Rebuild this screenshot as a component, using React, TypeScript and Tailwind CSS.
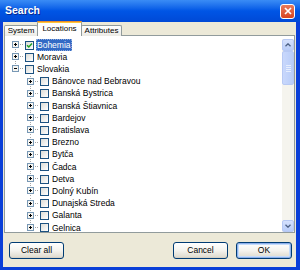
import React from 'react';

type Row = {
  label: string;
  level: number;
  open?: boolean;
  checked?: boolean;
  selected?: boolean;
  line: 'first' | 'mid' | 'last';
};

const districts = [
  'Bánovce nad Bebravou',
  'Banská Bystrica',
  'Banská Štiavnica',
  'Bardejov',
  'Bratislava',
  'Brezno',
  'Bytča',
  'Čadca',
  'Detva',
  'Dolný Kubín',
  'Dunajská Streda',
  'Galanta',
  'Gelnica',
];

const rows: Row[] = [
  { label: 'Bohemia', level: 0, checked: true, selected: true, line: 'first' },
  { label: 'Moravia', level: 0, line: 'mid' },
  { label: 'Slovakia', level: 0, open: true, line: 'last' },
  ...districts.map((d) => ({ label: d, level: 1, line: 'mid' as const })),
];

function Expander({ open, line }: { open?: boolean; line: Row['line'] }) {
  return (
    <svg width="15" height="12" viewBox="0 0 15 12" className="shrink-0">
      <line
        x1="7.5"
        x2="7.5"
        y1={line === 'first' ? 6 : 0}
        y2={line === 'last' ? 6 : 12}
        stroke="#A5A5A5"
        strokeDasharray="1 1"
      />
      <line x1="8" x2="15" y1="5.5" y2="5.5" stroke="#A5A5A5" strokeDasharray="1 1" />
      <rect x="4.5" y="2.5" width="6" height="6" fill="#F6F5F1" stroke="#7898B5" />
      <rect x="6" y="5" width="3" height="1" fill="#000" />
      {!open && <rect x="7" y="4" width="1" height="3" fill="#000" />}
    </svg>
  );
}

function Checkbox({ checked }: { checked?: boolean }) {
  return (
    <div className="w-[9px] h-[9px] shrink-0 border border-[#1C5180] bg-linear-to-br from-[#DCDCD7] to-white flex items-center justify-center">
      {checked && (
        <svg width="7" height="7" viewBox="0 0 7 7">
          <path d="M1 3.2 L2.8 5 L6 1.6" fill="none" stroke="#21A121" strokeWidth="1.5" />
        </svg>
      )}
    </div>
  );
}

function ScrollButton({ down }: { down?: boolean }) {
  return (
    <div className="h-[12px] w-[12px] shrink-0 rounded-[2px] border border-[#B7C9F4] bg-linear-to-b from-[#D5E1FD] to-[#B8CCF8] flex items-center justify-center">
      <svg width="6" height="4" viewBox="0 0 6 4">
        <path d={down ? 'M0.5 0.8 L3 3.2 L5.5 0.8' : 'M0.5 3.2 L3 0.8 L5.5 3.2'} fill="none" stroke="#4D6185" strokeWidth="1.3" />
      </svg>
    </div>
  );
}

function Button({ children, primary, w }: { children: React.ReactNode; primary?: boolean; w: string }) {
  return (
    <div
      className={`${w} h-[17px] rounded-[3px] border border-[#003C74] bg-linear-to-b from-white via-[#F4F3EE] to-[#DCD8CC] flex items-center justify-center text-[8.5px] text-black ${
        primary ? 'shadow-[inset_0_0_0_1px_#8CB0EC,inset_0_0_0_2px_#C4DCFB]' : 'shadow-[inset_0_-1px_0_#D6D0C5]'
      }`}
    >
      {children}
    </div>
  );
}

export default function App() {
  return (
    <div className="w-[300px] h-[270px] flex flex-col font-['Liberation_Sans',Arial,sans-serif] bg-white select-none">
      <div className="h-[22px] shrink-0 flex items-center pl-[5px] pr-[5px] bg-linear-to-b from-[#3A8CF5] via-[#0055E5] to-[#0049D6]">
        <span className="text-white font-bold text-[10.5px] [text-shadow:1px_1px_#0A2A90]">Search</span>
        <div className="ml-auto w-[15px] h-[15px] rounded-[3px] border border-white bg-linear-to-b from-[#E8795A] to-[#D8431D] flex items-center justify-center">
          <svg width="8" height="8" viewBox="0 0 8 8">
            <path d="M1 1 L7 7 M7 1 L1 7" stroke="white" strokeWidth="1.7" />
          </svg>
        </div>
      </div>

      <div className="flex-1 flex flex-col border-l-[3px] border-r-[4px] border-b-[3px] border-[#0A3FD8] bg-[#ECE9D8] px-[1px]">
        <div className="h-[14px] shrink-0 flex items-end relative z-10 -mb-px">
          <div className="w-[34px] h-[11px] rounded-t-[2px] border border-b-0 border-[#919B9C] bg-linear-to-b from-white to-[#ECEBE6] flex items-center justify-center text-[8px] text-black">
            System
          </div>
          <div className="w-[45px] h-[15px] -ml-px border-x border-[#919B9C] rounded-t-[2px] bg-white flex flex-col">
            <div className="h-[1px] bg-[#E68B2C] -mx-px rounded-t-[2px]" />
            <div className="h-[2px] bg-[#FFC83C]" />
            <div className="flex-1 flex items-center justify-center text-[8px] text-black pb-[1px]">Locations</div>
          </div>
          <div className="w-[41px] h-[11px] -ml-px rounded-t-[2px] border border-b-0 border-[#919B9C] bg-linear-to-b from-white to-[#ECEBE6] flex items-center justify-center text-[8px] text-black">
            Attributes
          </div>
        </div>

        <div className="h-[198px] shrink-0 border border-[#919B9C] bg-white flex pt-[3px]">
          <div className="flex-1 overflow-hidden pl-[3px]">
            {rows.map((r) => (
              <div key={r.label} className="h-[12.2px] flex items-center">
                {r.level === 1 && <div className="w-[15px] shrink-0" />}
                <Expander open={r.open} line={r.line} />
                <div className="ml-[2px]">
                  <Checkbox checked={r.checked} />
                </div>
                <span
                  className={`ml-[2px] px-[1px] h-full flex items-center text-[8.5px] whitespace-nowrap ${
                    r.selected ? 'bg-[#316AC5] text-white outline outline-dotted outline-[#8DA9DA] -outline-offset-1' : 'text-black'
                  }`}
                >
                  {r.label}
                </span>
              </div>
            ))}
          </div>
          <div className="w-[12px] shrink-0 flex flex-col bg-[#F5F4EE]">
            <ScrollButton />
            <div className="h-[34px] shrink-0 rounded-[2px] border border-[#B7C9F4] bg-linear-to-r from-[#C9D8FC] to-[#B9CDF8] flex flex-col items-center justify-center gap-[1px]">
              <div className="w-[5px] h-px bg-[#E6EEFE]" />
              <div className="w-[5px] h-px bg-[#E6EEFE]" />
              <div className="w-[5px] h-px bg-[#E6EEFE]" />
              <div className="w-[5px] h-px bg-[#E6EEFE]" />
            </div>
            <div className="flex-1" />
            <ScrollButton down />
          </div>
        </div>

        <div className="flex-1 flex items-start pt-[9px] pl-[5px] pr-[3px]">
          <Button w="w-[55px]">Clear all</Button>
          <div className="ml-auto flex gap-[8px]">
            <Button w="w-[55px]">Cancel</Button>
            <Button w="w-[56px]" primary>
              OK
            </Button>
          </div>
        </div>
      </div>
    </div>
  );
}
